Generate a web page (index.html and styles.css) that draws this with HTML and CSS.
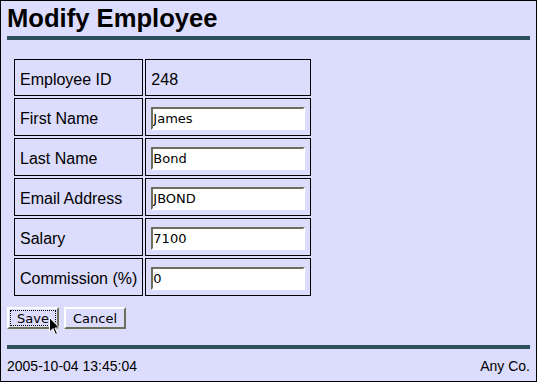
FILE: index.html
```html
<!DOCTYPE html>
<html lang="en">
<head>
    <meta charset="UTF-8">
    <title>Modify Employee</title>
    <link rel="stylesheet" href="styles.css">
</head>
<body>

    <h1 class="title">Modify Employee</h1>
    <div class="rule"></div>

    <form class="emp-form">
        <table class="emp-table">
            <tr>
                <td class="label">Employee ID</td>
                <td class="value">248</td>
            </tr>
            <tr>
                <td class="label">First Name</td>
                <td class="value field"><input type="text" value="James"></td>
            </tr>
            <tr>
                <td class="label">Last Name</td>
                <td class="value field"><input type="text" value="Bond"></td>
            </tr>
            <tr>
                <td class="label">Email Address</td>
                <td class="value field"><input type="text" value="JBOND"></td>
            </tr>
            <tr>
                <td class="label">Salary</td>
                <td class="value field"><input type="text" value="7100"></td>
            </tr>
            <tr>
                <td class="label">Commission (%)</td>
                <td class="value field"><input type="text" value="0"></td>
            </tr>
        </table>

        <div class="btn-set">
            <button type="button" class="btn save">Save</button>
            <button type="button" class="btn">Cancel</button>
            <svg class="cursor" width="12" height="19" viewBox="0 0 12 19">
                <path d="M0.5 0.5 L0.5 15 L4 11.5 L6.5 17.5 L8.5 16.5 L6 11 L10.5 11 Z" fill="#000" stroke="#fff" stroke-width="1"/>
            </svg>
        </div><!--btn-set-->
    </form>

    <div class="rule foot-rule"></div>
    <div class="footer">
        <span>2005-10-04 13:45:04</span>
        <span>Any Co.</span>
    </div><!--footer-->

</body>
</html>
```

FILE: styles.css
```css
*{
    margin:0;
    padding:0;
    box-sizing: border-box;
}

body{
    min-height: 382px;
    border: 1px solid #000;
    padding: 0 6px;
    background-color: #dcdcfc;
    color: #000;
    font-family: "Liberation Sans", Arial, sans-serif;
}

.title{
    margin-top: 3px;
    font-size: 25.6px;
    line-height: 29px;
    font-weight: bold;
}

.rule{
    height: 4px;
    margin-top: 3px;
    background-color: #2d505a;
}

.emp-table{
    margin: 17px 0 0 5px;
    border-collapse: separate;
    border-spacing: 2px;
}
.emp-table td{
    border: 1px solid #000;
    padding: 9px 5px 5px;
    font-size: 16px;
    line-height: 21px;
    vertical-align: top;
    white-space: nowrap;
}
.emp-table .label{
    width: 129px;
}
.emp-table .value{
    width: 166px;
}
.emp-table .field{
    padding-top: 8px;
}
.emp-table input{
    display: block;
    width: 154px;
    height: 23px;
    padding: 0 2px 0 0;
    border: 2px solid;
    border-color: #6e6e5a #fff #fff #6e6e5a;
    background-color: #fff;
    font-family: "DejaVu Sans", sans-serif;
    font-size: 13px;
    color: #000;
    outline: none;
}

.btn-set{
    position: relative;
    display: flex;
    gap: 5px;
    margin-top: 9px;
}
.btn{
    height: 22px;
    padding: 0 7px;
    border: 2px solid;
    border-color: #fff #6e6e5a #6e6e5a #fff;
    background-color: #dcdcfc;
    font-family: "DejaVu Sans", sans-serif;
    font-size: 13px;
    color: #000;
}
.btn.save{
    width: 52px;
    outline: 1px dotted #000;
    outline-offset: -4px;
}
.cursor{
    position: absolute;
    left: 42px;
    top: 10px;
}

.foot-rule{
    margin-top: 16px;
}

.footer{
    display: flex;
    justify-content: space-between;
    margin-top: 9px;
    font-size: 14px;
    line-height: 17px;
}
```
